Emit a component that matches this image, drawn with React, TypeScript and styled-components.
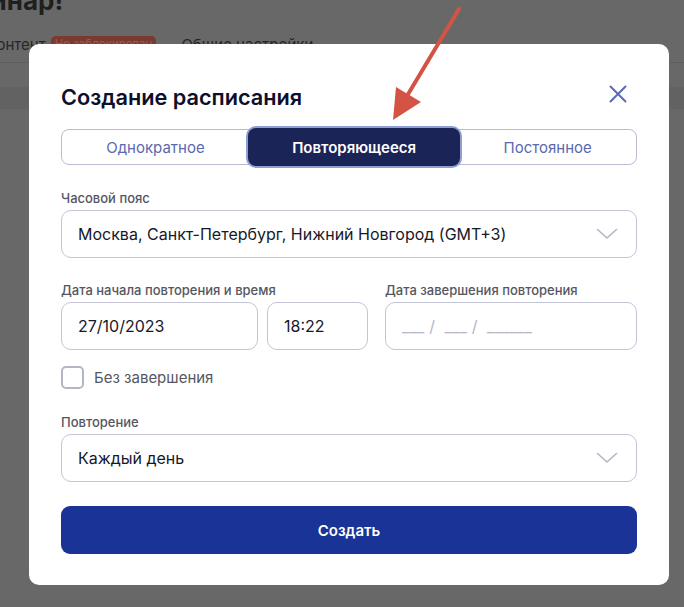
import React from "react";
import styled, { createGlobalStyle } from "styled-components";

const Global = createGlobalStyle`
  html, body { margin: 0; padding: 0; }
  body {
    width: 684px; height: 607px; overflow: hidden;
    background: #686868;
    font-family: Inter, "Noto Sans", "Liberation Sans", sans-serif;
  }
  * { box-sizing: border-box; }
`;

const Page = styled.div`
  position: relative;
  width: 684px;
  height: 607px;
  background: #686868;
  overflow: hidden;
`;

const PageHeading = styled.h1`
  margin: 0;
  padding: 0;
  margin-left: -58px;
  margin-top: -14px;
  font-size: 26px;
  font-weight: 700;
  color: #1f1f1f;
  line-height: 30px;
  white-space: nowrap;
`;

const PageTabs = styled.div`
  display: flex;
  align-items: center;
  gap: 25px;
  height: 47px;
  padding-top: 11px;
  margin-left: -13px;
  border-bottom: 1px solid #5e5e5e;
  font-size: 15px;
  color: #262626;
  white-space: nowrap;
`;

const PageTab = styled.div`
  display: flex;
  align-items: center;
  gap: 5px;
`;

const DimBadge = styled.span`
  background: #7a3a31;
  color: #9a5a50;
  border-radius: 5px;
  padding: 1px 4px;
  font-size: 11.5px;
  line-height: 15px;
`;

const PageBand = styled.div`
  margin-top: 24px;
  height: 22px;
  background: #626262;
`;

const Modal = styled.div`
  position: absolute;
  left: 29px;
  top: 44px;
  width: 640px;
  height: 541px;
  background: #fff;
  border-radius: 10px;
  padding: 38px 32px 0 32px;
  display: flex;
  flex-direction: column;
`;

const Header = styled.div`
  display: flex;
  align-items: center;
  justify-content: space-between;
  height: 30px;
`;

const Title = styled.h2`
  margin: 0;
  font-size: 21.7px;
  font-weight: 600;
  color: #0d0f2b;
`;

const CloseButton = styled.button`
  border: 0;
  background: transparent;
  padding: 0;
  margin: -6px 8px 0 0;
  width: 22px;
  height: 22px;
  display: flex;
  align-items: center;
  justify-content: center;
`;

const Segmented = styled.div`
  margin-top: 17px;
  display: flex;
  height: 36px;
  border: 1px solid #b9bbd3;
  border-radius: 8px;
  position: relative;
`;

const Segment = styled.div<{ $active?: boolean }>`
  flex: 1 1 auto;
  display: flex;
  align-items: center;
  justify-content: center;
  font-size: 15px;
  font-weight: ${(p) => (p.$active ? 600 : 400)};
  color: ${(p) => (p.$active ? "#ffffff" : "#5a68b0")};
  background: ${(p) => (p.$active ? "#1b2456" : "transparent")};
  border-radius: 8px;
  margin: ${(p) => (p.$active ? "-2px -1px -2px -1px" : "0")};
  box-shadow: ${(p) => (p.$active ? "0 0 0 2px #8f9fd6" : "none")};
  position: relative;
  white-space: nowrap;
`;

const Field = styled.div<{ $grow?: number; $width?: string }>`
  display: flex;
  flex-direction: column;
  gap: 4px;
  flex: ${(p) => (p.$width ? `0 0 ${p.$width}` : `${p.$grow ?? 1} 1 0`)};
  min-width: 0;
`;

const Label = styled.div`
  font-size: 13px;
  font-weight: 500;
  color: #555660;
  line-height: 16px;
  white-space: nowrap;
`;

const Block = styled.div<{ $mt: number }>`
  margin-top: ${(p) => p.$mt}px;
`;

const Row = styled.div<{ $gap: number }>`
  display: flex;
  gap: ${(p) => p.$gap}px;
`;

const InputBox = styled.div<{ $placeholder?: boolean }>`
  height: 48px;
  border: 1px solid #c3c4d6;
  border-radius: 10px;
  display: flex;
  align-items: center;
  justify-content: space-between;
  padding: 0 18px 0 16px;
  font-size: 16px;
  color: ${(p) => (p.$placeholder ? "#b4b5c9" : "#16182b")};
  letter-spacing: ${(p) => (p.$placeholder ? "0.2px" : "0")};
  white-space: pre;
`;

const CheckRow = styled.label`
  display: flex;
  align-items: center;
  gap: 10px;
  margin-top: 16px;
  font-size: 15px;
  color: #55565f;
`;

const CheckBox = styled.span`
  width: 23px;
  height: 23px;
  border: 2px solid #b5b6c4;
  border-radius: 5px;
  display: inline-block;
`;

const PrimaryButton = styled.button`
  margin-top: 24px;
  height: 48px;
  border: 0;
  border-radius: 9px;
  background: #193396;
  color: #fff;
  font-family: inherit;
  font-size: 15px;
  font-weight: 600;
`;

const ArrowSvg = styled.svg`
  position: absolute;
  left: 0;
  top: 0;
  pointer-events: none;
`;

const Chevron = () => (
  <svg width="22" height="12" viewBox="0 0 22 12" fill="none">
    <path d="M1.5 1.5 L11 10 L20.5 1.5" stroke="#b3b4c8" strokeWidth="1.6" strokeLinecap="round" strokeLinejoin="round" />
  </svg>
);

export default function App() {
  return (
    <>
      <Global />
      <Page>
        <PageHeading>Вебинар!</PageHeading>
        <PageTabs>
          <PageTab>
            Контент <DimBadge>Не заблокирован</DimBadge>
          </PageTab>
          <PageTab>Общие настройки</PageTab>
        </PageTabs>
        <PageBand />

        <Modal>
          <Header>
            <Title>Создание расписания</Title>
            <CloseButton aria-label="Закрыть">
              <svg width="18" height="18" viewBox="0 0 18 18" fill="none">
                <path d="M1.5 1.5 L16.5 16.5 M16.5 1.5 L1.5 16.5" stroke="#5b6ab6" strokeWidth="2" strokeLinecap="round" />
              </svg>
            </CloseButton>
          </Header>

          <Segmented>
            <Segment>Однократное</Segment>
            <Segment $active>Повторяющееся</Segment>
            <Segment>Постоянное</Segment>
          </Segmented>

          <Block $mt={25}>
            <Field>
              <Label>Часовой пояс</Label>
              <InputBox>
                Москва, Санкт-Петербург, Нижний Новгород (GMT+3)
                <Chevron />
              </InputBox>
            </Field>
          </Block>

          <Block $mt={24}>
            <Row $gap={17}>
              <Field $width="307px">
                <Label>Дата начала повторения и время</Label>
                <Row $gap={9}>
                  <Field $grow={197}>
                    <InputBox>27/10/2023</InputBox>
                  </Field>
                  <Field $width="101px">
                    <InputBox>18:22</InputBox>
                  </Field>
                </Row>
              </Field>
              <Field>
                <Label>Дата завершения повторения</Label>
                <InputBox $placeholder>{"___ /  ___ /  ______"}</InputBox>
              </Field>
            </Row>
          </Block>

          <CheckRow>
            <CheckBox />
            Без завершения
          </CheckRow>

          <Block $mt={25}>
            <Field>
              <Label>Повторение</Label>
              <InputBox>
                Каждый день
                <Chevron />
              </InputBox>
            </Field>
          </Block>

          <PrimaryButton>Создать</PrimaryButton>
        </Modal>

        <ArrowSvg width="684" height="607" viewBox="0 0 684 607">
          <line x1="459" y1="9" x2="404" y2="101" stroke="#d35445" strokeWidth="4" strokeLinecap="round" />
          <polygon points="393,120 396,87 421,102" fill="#d35445" />
        </ArrowSvg>
      </Page>
    </>
  );
}
